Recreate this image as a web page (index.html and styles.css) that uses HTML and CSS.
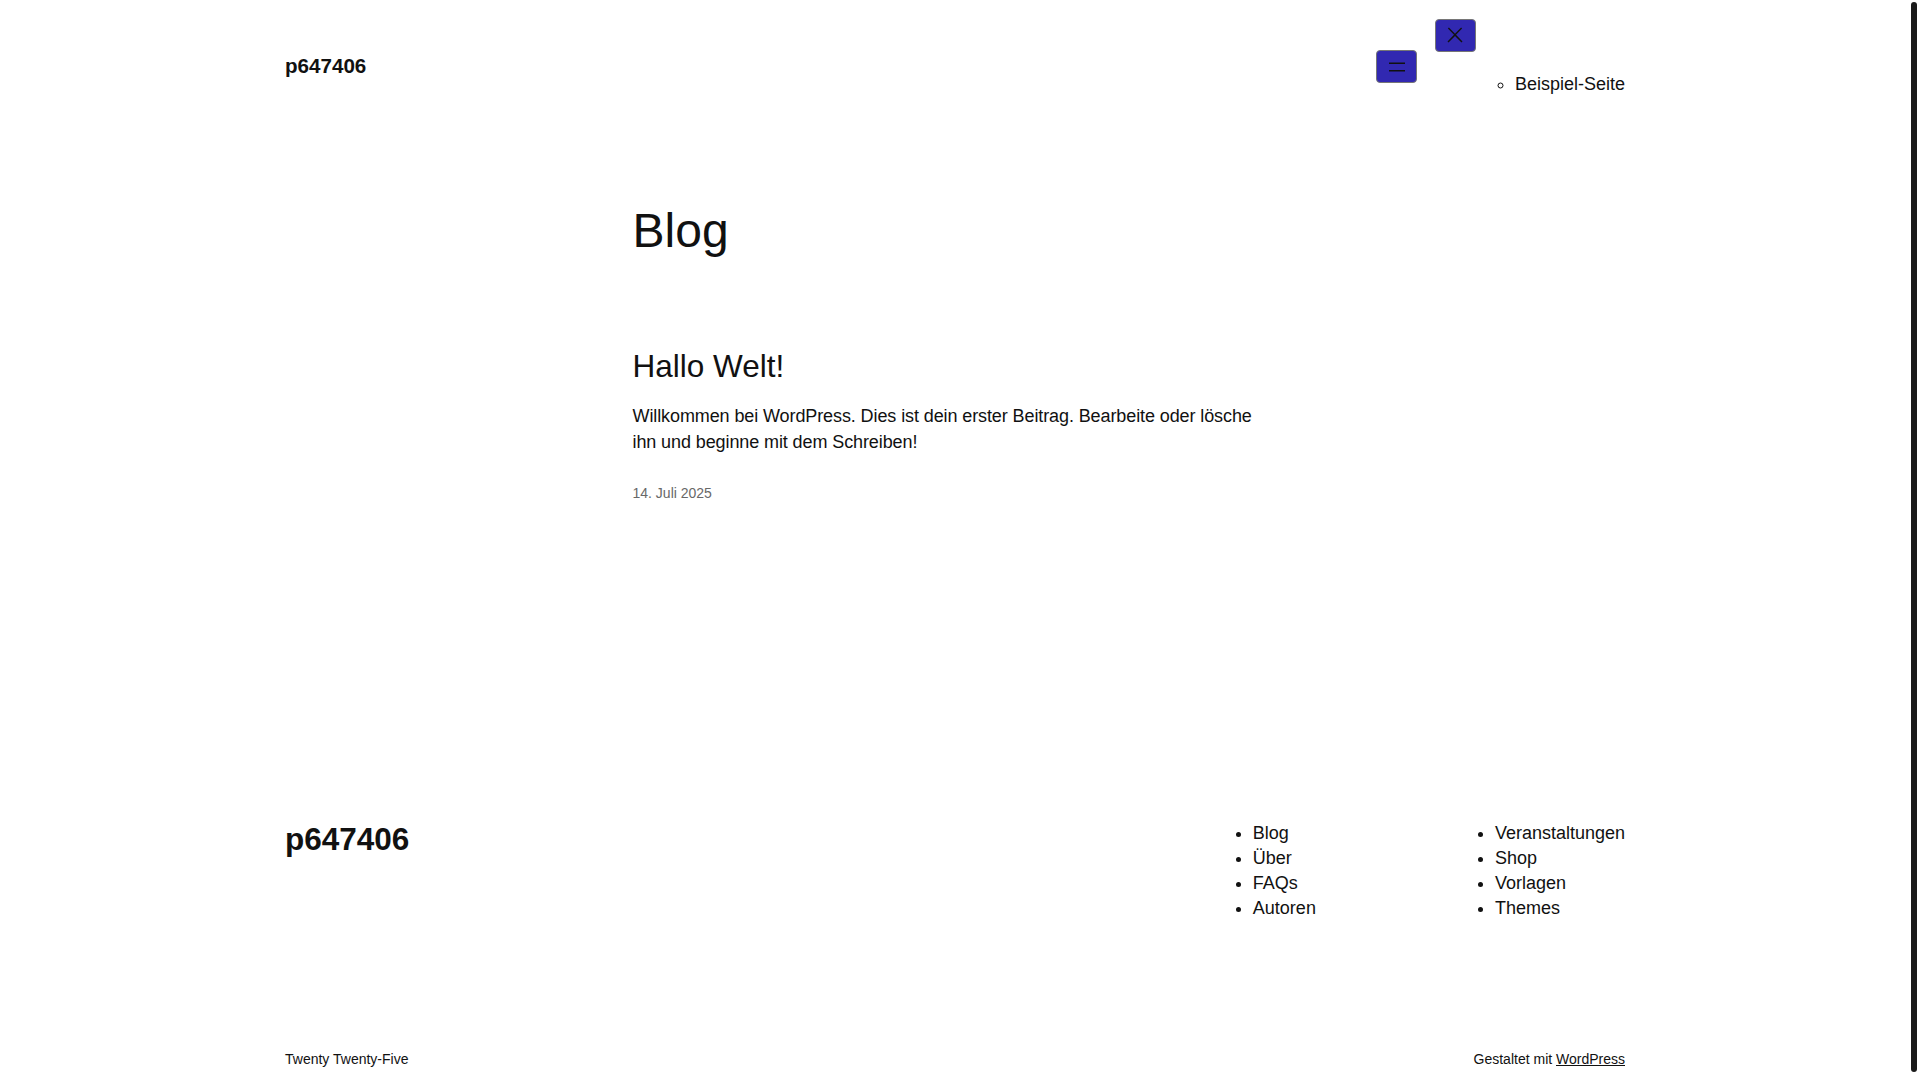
FILE: index.html
```html
<!DOCTYPE html>
<html lang="de">
<head>
    <meta charset="UTF-8">
    <meta name="viewport" content="width=device-width, initial-scale=1.0">
    <title>Blog – p647406</title>
    <link rel="stylesheet" href="styles.css">
</head>
<body>
    <header class="site-header">
        <div class="wrap header-row">
            <a class="site-title" href="#">p647406</a>
            <nav class="main-nav" aria-label="Hauptnavigation">
                <button class="nav-btn" aria-label="Menü öffnen">
                    <svg width="24" height="24" viewBox="0 0 24 24" aria-hidden="true"><rect x="4" y="7.5" width="16" height="1.5"></rect><rect x="4" y="15" width="16" height="1.5"></rect></svg>
                </button>
                <div class="nav-panel">
                    <button class="nav-btn" aria-label="Menü schließen">
                        <svg width="24" height="24" viewBox="0 0 24 24" aria-hidden="true"><path d="M13 11.8l6.1-6.3-1-1-6.1 6.2-6.1-6.2-1 1 6.1 6.3-6.5 6.7 1 1 6.5-6.6 6.5 6.6 1-1z"></path></svg>
                    </button>
                    <ul class="nav-list">
                        <li><a href="#">Beispiel-Seite</a></li>
                    </ul>
                </div>
            </nav>
        </div>
    </header>

    <main class="site-main">
        <div class="content">
            <h1 class="page-title">Blog</h1>

            <article class="post">
                <h2 class="post-title"><a href="#">Hallo Welt!</a></h2>
                <p class="post-excerpt">Willkommen bei WordPress. Dies ist dein erster Beitrag. Bearbeite oder lösche ihn und beginne mit dem Schreiben!</p>
                <div class="post-date">14. Juli 2025</div>
            </article>
        </div>
    </main>

    <footer class="site-footer">
        <div class="wrap footer-row">
            <a class="footer-title" href="#">p647406</a>
            <div class="footer-navs">
                <ul class="footer-list">
                    <li><a href="#">Blog</a></li>
                    <li><a href="#">Über</a></li>
                    <li><a href="#">FAQs</a></li>
                    <li><a href="#">Autoren</a></li>
                </ul>
                <ul class="footer-list">
                    <li><a href="#">Veranstaltungen</a></li>
                    <li><a href="#">Shop</a></li>
                    <li><a href="#">Vorlagen</a></li>
                    <li><a href="#">Themes</a></li>
                </ul>
            </div>
        </div>
        <div class="wrap footer-bottom">
            <span>Twenty Twenty-Five</span>
            <span>Gestaltet mit <a class="underline" href="#">WordPress</a></span>
        </div>
    </footer>

    <div class="scrollbar"><div class="scrollbar-thumb"></div></div>
</body>
</html>
```

FILE: styles.css
```css
body {
    margin: 0;
    padding: 0 60px 0 50px;
    font-family: 'Liberation Sans', Arial, sans-serif;
    font-size: 18px;
    line-height: 1.4;
    color: #111;
    background-color: #fff;
}
a {
    color: inherit;
    text-decoration: none;
}
.wrap {
    max-width: 1340px;
    margin: 0 auto;
}
.header-row {
    display: flex;
    justify-content: space-between;
    align-items: center;
    padding-top: 18.5px;
}
.site-title {
    font-size: 20.6px;
    font-weight: bold;
    line-height: 1.2;
}
.main-nav {
    display: flex;
    align-items: center;
    gap: 17.5px;
}
.nav-btn {
    display: flex;
    padding: 3.5px 7.5px;
    background-color: #3128b1;
    border: 1px solid #767676;
    border-radius: 4px;
    cursor: pointer;
}
.nav-btn svg {
    fill: #111;
}
.nav-panel {
    display: flex;
    flex-direction: column;
    align-items: flex-start;
}
.nav-list {
    margin: 20px 0 18px;
    padding-left: 80px;
    list-style: circle;
}
.site-main {
    padding-top: 87px;
}
.content {
    max-width: 645px;
    margin: 0 auto;
}
.page-title {
    margin: 0;
    font-size: 48px;
    font-weight: normal;
    line-height: 1.2;
}
.post {
    margin-top: 89.2px;
}
.post-title {
    margin: 0;
    font-size: 31.5px;
    font-weight: normal;
    line-height: 1.2;
}
.post-excerpt {
    margin: 17.7px 0 0;
    line-height: 1.42;
    letter-spacing: -0.1px;
}
.post-date {
    margin-top: 29.3px;
    font-size: 14px;
    color: #686868;
}
.site-footer {
    margin-top: 316.8px;
    padding-bottom: 30px;
}
.footer-row {
    display: flex;
    justify-content: space-between;
    align-items: flex-start;
}
.footer-title {
    font-size: 31.5px;
    font-weight: bold;
    line-height: 1.2;
}
.footer-navs {
    display: flex;
    gap: 139px;
}
.footer-list {
    margin: 0;
    padding-left: 40px;
}
.footer-bottom {
    display: flex;
    justify-content: space-between;
    margin-top: 128.5px;
    font-size: 14px;
}
.underline {
    text-decoration: underline;
}
.scrollbar {
    position: fixed;
    top: 0;
    right: 0;
    bottom: 0;
    width: 10px;
    padding: 2px 3px 8px 1px;
    box-sizing: border-box;
    background-color: #fff;
}
.scrollbar-thumb {
    height: 100%;
    background-color: #1a1a1a;
    border-radius: 3px;
}
```
